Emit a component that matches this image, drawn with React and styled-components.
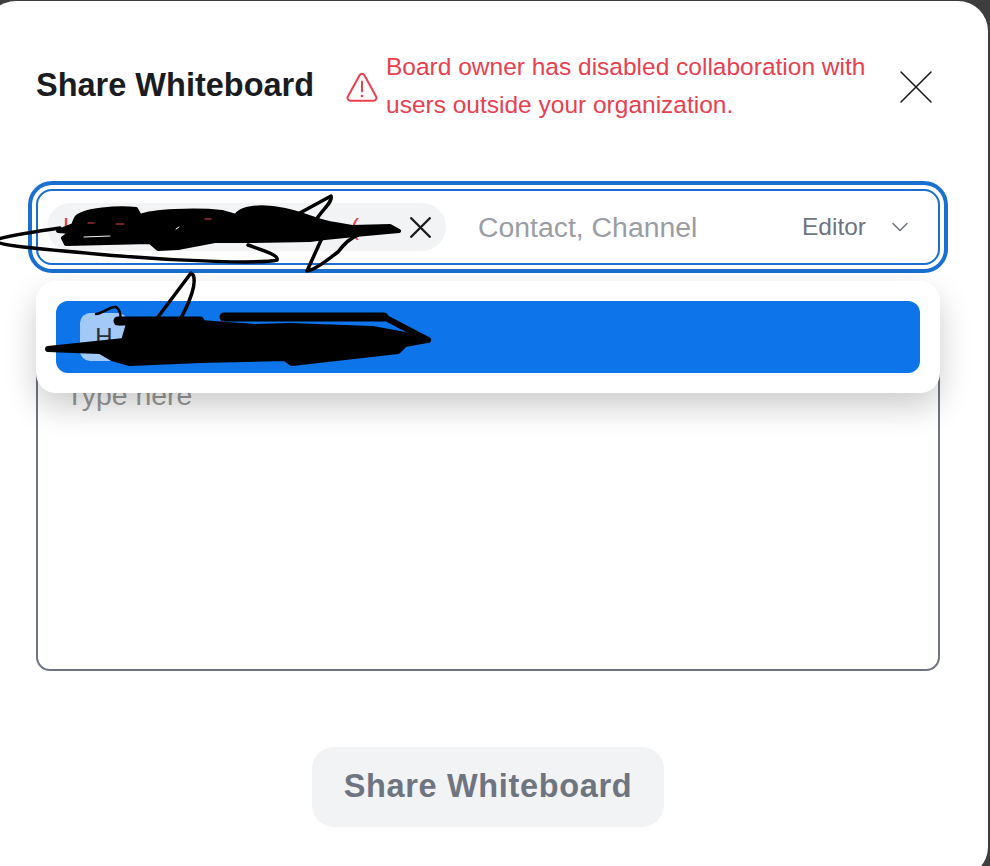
import React from 'react';
import styled, { createGlobalStyle } from 'styled-components';

const GlobalStyle = createGlobalStyle`
  html, body {
    margin: 0;
    padding: 0;
    height: 100%;
    overflow: hidden;
    background: #3d3d3d;
    font-family: "Liberation Sans", Arial, sans-serif;
  }
`;

const App = () => {
  return (
    <Page>
      <GlobalStyle />
      <Modal>
        <Header>
          <Title>Share Whiteboard</Title>
          <ErrorBox>
            <WarningIcon />
            <ErrorText>
              Board owner has disabled collaboration with users outside your organization.
            </ErrorText>
          </ErrorBox>
          <CloseButton>
            <CrossIcon size={34} weight={1.6} />
          </CloseButton>
        </Header>

        <FieldWrap>
          <Field>
            <Chip>
              <ChipName>
                <span>H</span>
                <span>(</span>
              </ChipName>
              <CrossIcon size={21} weight={2.4} />
            </Chip>
            <Placeholder>Contact, Channel</Placeholder>
            <RoleSelect>
              Editor
              <ChevronIcon />
            </RoleSelect>
          </Field>

          <Dropdown>
            <DropdownItem>
              <Avatar>H</Avatar>
            </DropdownItem>
          </Dropdown>
        </FieldWrap>

        <MessageBox>
          <MessagePlaceholder>Type here</MessagePlaceholder>
        </MessageBox>

        <Footer>
          <ShareButton>Share Whiteboard</ShareButton>
        </Footer>
      </Modal>
      <Scribbles />
    </Page>
  );
};

const WarningIcon = () => (
  <ErrorIconSvg viewBox="0 0 32 30" fill="none" stroke="#e8404f" strokeWidth="2" strokeLinecap="round" strokeLinejoin="round">
    <path d="M13.6 3.2 1.9 24.4c-1.1 2 .3 4.4 2.6 4.4h23c2.3 0 3.7-2.4 2.6-4.4L18.4 3.2c-1.1-2-3.7-2-4.8 0Z" />
    <path d="M16 9.5v10" />
    <path d="M16 24h.02" strokeWidth="2.6" />
  </ErrorIconSvg>
);

const CrossIcon = ({ size, weight }) => (
  <svg width={size} height={size} viewBox="0 0 34 34" fill="none" stroke="#1b1c1f" strokeWidth={(weight * 34) / size} strokeLinecap="round">
    <path d="M2 2 32 32M32 2 2 32" />
  </svg>
);

const ChevronIcon = () => (
  <ChevronSvg viewBox="0 0 16 10" fill="none" stroke="#6e7580" strokeWidth="1.5" strokeLinecap="round" strokeLinejoin="round">
    <path d="M1 1.5 8 8.5 15 1.5" />
  </ChevronSvg>
);

// the hand drawn redaction marks that sit on top of the chip and the dropdown row
const Scribbles = () => (
  <ScribbleSvg viewBox="0 0 990 866" fill="none" stroke="#000" strokeLinecap="round" strokeLinejoin="round">
    <path fill="#000" strokeWidth="4" d="M76 218 C82 209 120 207 136 209 L140 216 C152 211 195 209 222 212 L236 216 C240 207 262 205 285 210 C305 214 318 222 335 224 L352 227 L390 226 L399 231 L355 235 L325 238 L310 240 L250 241 L215 241 L178 248 L158 249 L150 242 L66 244 L63 238 L72 232 L58 231 L73 225 Z" />
    <path stroke="#e8404f" strokeWidth="1.2" d="M88 223 H94M116 224 H124M205 219 H211" />
    <path stroke="#f2f3f5" strokeWidth="1" d="M84 237 L110 236M176 229 L179 227" />
    <path strokeWidth="3.5" d="M60 228 C32 232 8 236 -6 240 C-4 246 50 250 120 256 C180 261 262 264 277 260 C279 255 262 250 248 245" />
    <path strokeWidth="3.5" d="M298 214 L331 196 C333 202 322 210 316 220" />
    <path strokeWidth="3.5" d="M322 238 L307 271 C316 270 330 258 338 252 C344 244 350 238 358 235" />

    <path strokeWidth="3.5" d="M158 317 L191 273 C197 276 195 292 181 318" />
    <path strokeWidth="2.5" d="M96 314 C104 313 110 306 116 307 C121 310 121 318 120 324" />
    <path strokeWidth="9" d="M118 321 H200" />
    <path strokeWidth="9" d="M224 317 H384" />
    <path strokeWidth="6" d="M384 317 L428 340" />
    <path fill="#000" strokeWidth="6" d="M128 327 L200 323 L255 327 L290 326 L372 329 L400 334 L427 340 L405 344 L398 351 L345 357 L292 363 L285 358 L200 360 L130 363 L112 358 L100 351 L48 349 L124 341 Z" />
  </ScribbleSvg>
);

const Page = styled.div`
  position: relative;
  width: 990px;
  height: 866px;
  overflow: hidden;
  background: #3d3d3d;
`;

const Modal = styled.div`
  box-sizing: border-box;
  width: 1002px;
  height: 876px;
  margin: 1px 0 0 -14px;
  padding: 47px 48px 0 50px;
  background: #fff;
  border-radius: 30px;
`;

const Header = styled.header`
  display: flex;
  align-items: center;
  height: 76px;
`;

const Title = styled.h1`
  margin: -2px 0 0;
  width: 310px;
  font-size: 32.5px;
  font-weight: 700;
  color: #1b1c1f;
  white-space: nowrap;
`;

const ErrorBox = styled.div`
  display: flex;
  align-items: center;
  gap: 8px;
  width: 530px;
`;

const ErrorIconSvg = styled.svg`
  flex: none;
  width: 32px;
  height: 30px;
  margin-top: 2px;
`;

const ErrorText = styled.p`
  margin: 0;
  width: 490px;
  font-size: 24.5px;
  line-height: 38px;
  color: #e8404f;
`;

const CloseButton = styled.div`
  display: flex;
  margin: 2px 0 0 23px;
`;

const FieldWrap = styled.div`
  position: relative;
  margin-top: 65px;
`;

const Field = styled.div`
  box-sizing: border-box;
  display: flex;
  align-items: center;
  height: 76px;
  padding: 0 30px 0 9px;
  border: 2px solid #1a6fd0;
  border-radius: 16px;
  box-shadow: 0 0 0 4px #fff, 0 0 0 8px #1a6fd0;
`;

const Chip = styled.div`
  box-sizing: border-box;
  display: flex;
  align-items: center;
  justify-content: space-between;
  width: 399px;
  height: 48px;
  padding: 0 15px 0 16px;
  background: #f2f3f5;
  border-radius: 24px;
`;

const ChipName = styled.div`
  display: flex;
  justify-content: space-between;
  width: 296px;
  font-size: 24px;
  color: #e8404f;
`;

const Placeholder = styled.div`
  margin-left: 32px;
  flex: 1;
  font-size: 28.4px;
  color: #9a9da3;
  white-space: nowrap;
`;

const RoleSelect = styled.div`
  display: flex;
  align-items: center;
  gap: 26px;
  font-size: 24.5px;
  color: #6e7580;
`;

const ChevronSvg = styled.svg`
  width: 16px;
  height: 10px;
`;

const Dropdown = styled.div`
  position: absolute;
  z-index: 2;
  top: 92px;
  left: 0;
  right: 0;
  padding: 20px;
  background: #fff;
  border-radius: 20px;
  box-shadow: 0 14px 32px rgba(0, 0, 0, 0.2);
`;

const DropdownItem = styled.div`
  display: flex;
  align-items: center;
  height: 72px;
  padding-left: 24px;
  background: #0d74ea;
  border-radius: 12px;
`;

const Avatar = styled.div`
  display: flex;
  align-items: center;
  justify-content: center;
  width: 48px;
  height: 48px;
  background: #a3c9f9;
  border-radius: 10px;
  font-size: 24px;
  color: #2a2f36;
`;

const MessageBox = styled.div`
  box-sizing: border-box;
  height: 319px;
  margin-top: 87px;
  padding: 26px 28px;
  border: 2px solid #6e7580;
  border-radius: 14px;
`;

const MessagePlaceholder = styled.div`
  font-size: 28.4px;
  line-height: 31px;
  color: #999;
`;

const Footer = styled.div`
  display: flex;
  justify-content: center;
  margin-top: 76px;
`;

const ShareButton = styled.div`
  box-sizing: border-box;
  display: flex;
  align-items: center;
  justify-content: center;
  width: 352px;
  height: 80px;
  padding-bottom: 2px;
  background: #f2f3f5;
  border-radius: 22px;
  font-size: 32.5px;
  font-weight: 700;
  letter-spacing: 0.65px;
  color: #6e7580;
`;

const ScribbleSvg = styled.svg`
  position: absolute;
  z-index: 3;
  top: 0;
  left: 0;
  width: 990px;
  height: 866px;
  pointer-events: none;
`;

export default App;
